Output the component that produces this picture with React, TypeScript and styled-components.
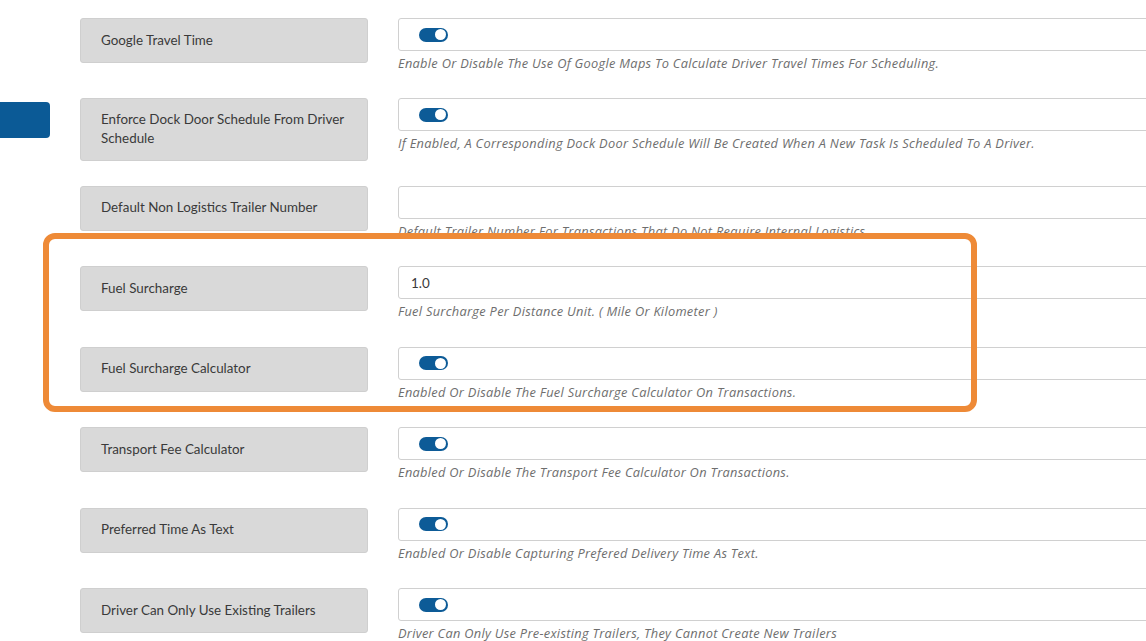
import React from "react";
import styled, { createGlobalStyle } from "styled-components";

const Global = createGlobalStyle`
  html, body { margin: 0; padding: 0; background: #fff; overflow: hidden; }
  body { font-family: Lato, "Open Sans", sans-serif; }
`;

const Page = styled.div`
  position: relative;
  width: 1146px;
  height: 641px;
  overflow: hidden;
  padding: 18px 0 0 80px;
  box-sizing: border-box;
`;

const Row = styled.div`
  display: flex;
  align-items: flex-start;
  gap: 30px;
  margin-bottom: 24.1px;
`;

const Label = styled.div<{ $tall?: boolean }>`
  width: 288px;
  flex: none;
  box-sizing: border-box;
  height: ${(p) => (p.$tall ? "63px" : "45px")};
  padding: ${(p) => (p.$tall ? "0 20px 2px" : "0 20px 1px")};
  display: flex;
  align-items: center;
  background: #d9d9d9;
  border: 1px solid #cfcfcf;
  border-radius: 3px;
  color: #3a3a3a;
  font-size: 13.4px;
  line-height: 19px;
`;

const Field = styled.div`
  width: 800px;
  min-height: 56.4px;
  flex: none;
  display: flex;
  flex-direction: column;
`;

const InputBox = styled.div`
  height: 33px;
  box-sizing: border-box;
  border: 1px solid #d0d0d0;
  border-radius: 3px;
  display: flex;
  align-items: center;
  padding-left: 12px;
  font-size: 13.4px;
  color: #3a3a3a;
`;

const Help = styled.div`
  margin-top: 3px;
  font-family: "Open Sans", Lato, sans-serif;
  font-size: 12.8px;
  letter-spacing: 0.3px;
  line-height: 18px;
  font-style: italic;
  color: #6e6e6e;
  white-space: nowrap;
`;

const Toggle = styled.span`
  position: relative;
  display: inline-block;
  width: 29px;
  height: 14px;
  margin-left: 8px;
  border-radius: 7px;
  background: #0d5b97;
  &::after {
    content: "";
    position: absolute;
    right: 2px;
    top: 1.5px;
    width: 11px;
    height: 11px;
    border-radius: 50%;
    background: #fff;
  }
`;

const SideTab = styled.div`
  position: absolute;
  left: 0;
  top: 102px;
  width: 50px;
  height: 36px;
  background: #0b5a96;
  border-radius: 0 4px 4px 0;
`;

const Highlight = styled.div`
  position: absolute;
  left: 43px;
  top: 233px;
  width: 934px;
  height: 179px;
  box-sizing: border-box;
  border: 6px solid #ee8a37;
  border-radius: 12px;
  pointer-events: none;
`;

type Item = {
  label: string;
  help: string;
  toggle?: boolean;
  value?: string;
  tall?: boolean;
};

const items: Item[] = [
  {
    label: "Google Travel Time",
    help: "Enable Or Disable The Use Of Google Maps To Calculate Driver Travel Times For Scheduling.",
    toggle: true,
  },
  {
    label: "Enforce Dock Door Schedule From Driver Schedule",
    help: "If Enabled, A Corresponding Dock Door Schedule Will Be Created When A New Task Is Scheduled To A Driver.",
    toggle: true,
    tall: true,
  },
  {
    label: "Default Non Logistics Trailer Number",
    help: "Default Trailer Number For Transactions That Do Not Require Internal Logistics.",
    value: "",
  },
  {
    label: "Fuel Surcharge",
    help: "Fuel Surcharge Per Distance Unit. ( Mile Or Kilometer )",
    value: "1.0",
  },
  {
    label: "Fuel Surcharge Calculator",
    help: "Enabled Or Disable The Fuel Surcharge Calculator On Transactions.",
    toggle: true,
  },
  {
    label: "Transport Fee Calculator",
    help: "Enabled Or Disable The Transport Fee Calculator On Transactions.",
    toggle: true,
  },
  {
    label: "Preferred Time As Text",
    help: "Enabled Or Disable Capturing Prefered Delivery Time As Text.",
    toggle: true,
  },
  {
    label: "Driver Can Only Use Existing Trailers",
    help: "Driver Can Only Use Pre-existing Trailers, They Cannot Create New Trailers",
    toggle: true,
  },
];

export default function App() {
  return (
    <>
      <Global />
      <Page>
        {items.map((it) => (
          <Row key={it.label}>
            <Label $tall={it.tall}>{it.label}</Label>
            <Field>
              <InputBox>{it.toggle ? <Toggle /> : it.value}</InputBox>
              <Help>{it.help}</Help>
            </Field>
          </Row>
        ))}
        <SideTab />
        <Highlight />
      </Page>
    </>
  );
}
